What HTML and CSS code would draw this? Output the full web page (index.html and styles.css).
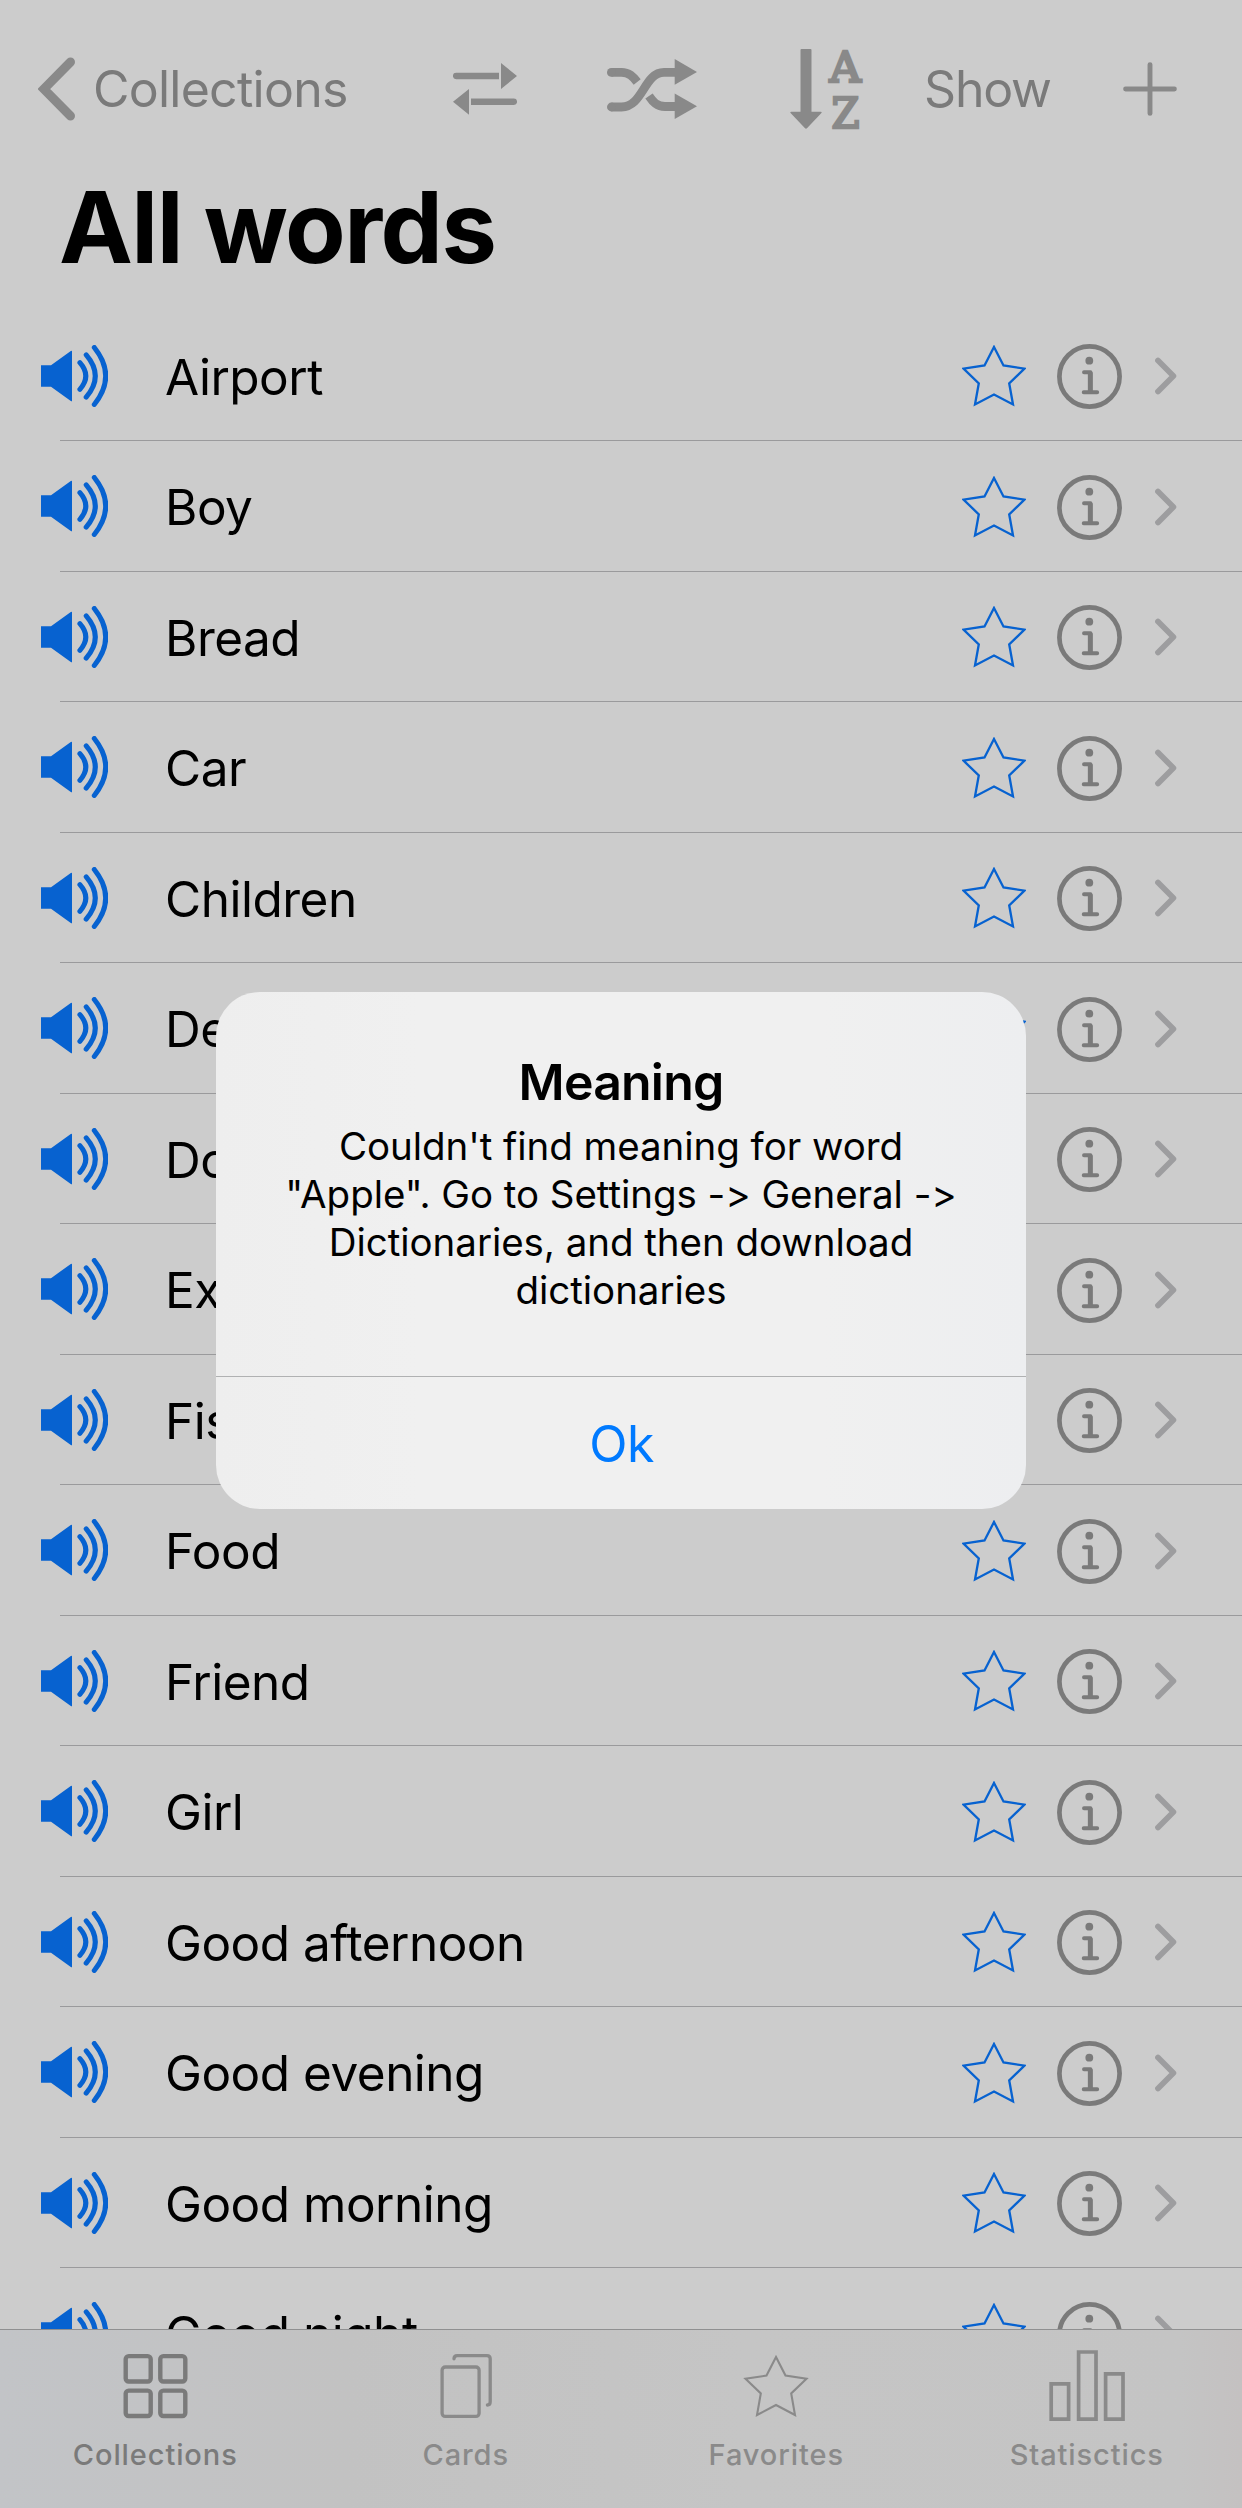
FILE: index.html
```html
<!DOCTYPE html>
<html lang="en">
<head>
<meta charset="utf-8">
<title>All words</title>
<link rel="stylesheet" href="styles.css">
</head>
<body>
<svg class="sprite" aria-hidden="true">
  <symbol id="speaker" viewBox="0 0 67 62">
    <path fill="currentColor" d="M0 20.2H10L29.8 5.9Q31 5.2 31 6.6V55.4Q31 56.8 29.8 56L10 41.8H0Z"/>
    <path fill="none" stroke="currentColor" stroke-width="5" stroke-linecap="round" d="M38.9 17.7Q50.7 31 38.9 44.3M45.2 9.9Q63.4 31 45.2 52.1M53.3 2.5Q76.1 31 53.3 59.5"/>
  </symbol>
  <symbol id="star" viewBox="0 0 64 62">
    <path fill="none" stroke="currentColor" stroke-width="2.3" d="M32 2 41.5 20.5 62.5 23.7 47.2 38.3 51 59.5 32 49.5 13 59.5 16.8 38.3 1.5 23.7 22.5 20.5Z"/>
  </symbol>
  <symbol id="info" viewBox="0 0 65 65">
    <circle cx="32.5" cy="32.5" r="30.1" fill="none" stroke="currentColor" stroke-width="4.7"/>
    <circle cx="32.3" cy="16.7" r="3.9" fill="currentColor"/>
    <path fill="none" stroke="currentColor" stroke-width="3.9" stroke-linecap="round" stroke-linejoin="round" d="M27 28.3H33.5V48M26.7 48.3H40.2"/>
    <path stroke="currentColor" stroke-width="4.9" d="M33.3 28.3V48"/>
  </symbol>
  <symbol id="chevron" viewBox="0 0 22 38">
    <path fill="none" stroke="currentColor" stroke-width="5.7" stroke-linecap="round" stroke-linejoin="round" d="M3 3.6 18.4 19 3 34.4"/>
  </symbol>
</svg>
<div class="screen">
  <header class="nav">
    <a class="back">
      <svg class="icon-back" viewBox="0 0 38 64"><path fill="none" stroke="currentColor" stroke-width="9" stroke-linecap="round" d="M32.5 5 5.8 32 32.5 59"/></svg>
      <span class="back-label">Collections</span>
    </a>
    <svg class="icon-swap" viewBox="0 0 64 52">
      <path fill="currentColor" d="M3.2 9.7H46V16.2H3.2A3.2 3.2 0 0 1 3.2 9.7ZM48 0 64 13 48 26ZM60.8 35.5H18V42H60.8A3.2 3.2 0 0 0 60.8 35.5ZM16 26 0 38.8 16 51.7Z"/>
    </svg>
    <svg class="icon-shuffle" viewBox="0 0 90 60">
      <path fill="currentColor" d="M67.7 0 90 13 67.7 25.7ZM67.7 34.5 90 47.3 67.7 60Z"/>
      <path fill="none" stroke="currentColor" stroke-width="8.8" d="M4.4 13.4H14.5C22 13.4 26 17.5 30.2 23M4.4 48H14.5C36 48 37 13.4 57 13.4H68.5M42 37C46 43 50 47.5 58 47.5H68.5"/>
      <circle cx="4.4" cy="13.4" r="4.4" fill="currentColor"/><circle cx="4.4" cy="48" r="4.4" fill="currentColor"/>
    </svg>
    <svg class="icon-sort" viewBox="0 0 74 80">
      <path fill="currentColor" d="M10.5 1Q10.5 0 11.5 0H20.5Q21.5 0 21.5 1V62.8H30.5Q32.5 62.8 31.2 64.2L17.2 79Q16 80.5 14.8 79L.8 64.2Q-.5 62.8 1.5 62.8H10.5Z"/>
      <text class="sort-letter" x="39.4" y="32.7" textLength="31.5" lengthAdjust="spacingAndGlyphs">A</text>
      <text class="sort-letter" x="41.5" y="78.7" textLength="28" lengthAdjust="spacingAndGlyphs">Z</text>
    </svg>
    <a class="show">Show</a>
    <svg class="icon-plus" viewBox="0 0 54 54"><path stroke="currentColor" stroke-width="4.9" stroke-linecap="round" d="M27 2.6V51.4M2.6 27H51.4"/></svg>
  </header>
  <h1 class="title">All words</h1>
  <main class="list">
    <div class="row"><svg class="speaker"><use href="#speaker"/></svg><div class="word">Airport</div><svg class="star"><use href="#star"/></svg><svg class="info"><use href="#info"/></svg><svg class="chevron"><use href="#chevron"/></svg></div>
    <div class="row"><svg class="speaker"><use href="#speaker"/></svg><div class="word">Boy</div><svg class="star"><use href="#star"/></svg><svg class="info"><use href="#info"/></svg><svg class="chevron"><use href="#chevron"/></svg></div>
    <div class="row"><svg class="speaker"><use href="#speaker"/></svg><div class="word">Bread</div><svg class="star"><use href="#star"/></svg><svg class="info"><use href="#info"/></svg><svg class="chevron"><use href="#chevron"/></svg></div>
    <div class="row"><svg class="speaker"><use href="#speaker"/></svg><div class="word">Car</div><svg class="star"><use href="#star"/></svg><svg class="info"><use href="#info"/></svg><svg class="chevron"><use href="#chevron"/></svg></div>
    <div class="row"><svg class="speaker"><use href="#speaker"/></svg><div class="word">Children</div><svg class="star"><use href="#star"/></svg><svg class="info"><use href="#info"/></svg><svg class="chevron"><use href="#chevron"/></svg></div>
    <div class="row"><svg class="speaker"><use href="#speaker"/></svg><div class="word">Desk</div><svg class="star"><use href="#star"/></svg><svg class="info"><use href="#info"/></svg><svg class="chevron"><use href="#chevron"/></svg></div>
    <div class="row"><svg class="speaker"><use href="#speaker"/></svg><div class="word">Dog</div><svg class="star"><use href="#star"/></svg><svg class="info"><use href="#info"/></svg><svg class="chevron"><use href="#chevron"/></svg></div>
    <div class="row"><svg class="speaker"><use href="#speaker"/></svg><div class="word">Exit</div><svg class="star"><use href="#star"/></svg><svg class="info"><use href="#info"/></svg><svg class="chevron"><use href="#chevron"/></svg></div>
    <div class="row"><svg class="speaker"><use href="#speaker"/></svg><div class="word">Fish</div><svg class="star"><use href="#star"/></svg><svg class="info"><use href="#info"/></svg><svg class="chevron"><use href="#chevron"/></svg></div>
    <div class="row"><svg class="speaker"><use href="#speaker"/></svg><div class="word">Food</div><svg class="star"><use href="#star"/></svg><svg class="info"><use href="#info"/></svg><svg class="chevron"><use href="#chevron"/></svg></div>
    <div class="row"><svg class="speaker"><use href="#speaker"/></svg><div class="word">Friend</div><svg class="star"><use href="#star"/></svg><svg class="info"><use href="#info"/></svg><svg class="chevron"><use href="#chevron"/></svg></div>
    <div class="row"><svg class="speaker"><use href="#speaker"/></svg><div class="word">Girl</div><svg class="star"><use href="#star"/></svg><svg class="info"><use href="#info"/></svg><svg class="chevron"><use href="#chevron"/></svg></div>
    <div class="row"><svg class="speaker"><use href="#speaker"/></svg><div class="word">Good afternoon</div><svg class="star"><use href="#star"/></svg><svg class="info"><use href="#info"/></svg><svg class="chevron"><use href="#chevron"/></svg></div>
    <div class="row"><svg class="speaker"><use href="#speaker"/></svg><div class="word">Good evening</div><svg class="star"><use href="#star"/></svg><svg class="info"><use href="#info"/></svg><svg class="chevron"><use href="#chevron"/></svg></div>
    <div class="row"><svg class="speaker"><use href="#speaker"/></svg><div class="word">Good morning</div><svg class="star"><use href="#star"/></svg><svg class="info"><use href="#info"/></svg><svg class="chevron"><use href="#chevron"/></svg></div>
    <div class="row"><svg class="speaker"><use href="#speaker"/></svg><div class="word">Good night</div><svg class="star"><use href="#star"/></svg><svg class="info"><use href="#info"/></svg><svg class="chevron"><use href="#chevron"/></svg></div>
  </main>
  <nav class="tabs">
    <a class="tab active">
      <svg class="tab-icon" viewBox="0 0 76 74"><g fill="none" stroke="currentColor" stroke-width="4.4"><rect x="8.7" y="7.1" width="25" height="25.4" rx="3"/><rect x="43.3" y="7.1" width="25" height="25.4" rx="3"/><rect x="8.7" y="41.6" width="25" height="25.4" rx="3"/><rect x="43.3" y="41.6" width="25" height="25.4" rx="3"/></g></svg>
      <span class="tab-label">Collections</span>
    </a>
    <a class="tab">
      <svg class="tab-icon" viewBox="0 0 76 74"><g fill="none" stroke="currentColor" stroke-width="3.3" stroke-linecap="round"><rect x="14.1" y="18" width="37" height="49.4" rx="3.2"/><path d="M26 9.8Q26 6.6 29.2 6.6H59Q62.2 6.6 62.2 9.8V52.8Q62.2 56 59.4 56"/></g></svg>
      <span class="tab-label">Cards</span>
    </a>
    <a class="tab">
      <svg class="tab-icon" viewBox="0 0 76 74"><path fill="none" stroke="currentColor" stroke-width="2.1" d="M38 8 47.5 26.6 68.5 29.8 53.2 44.4 57 66 38 56 19 66 22.8 44.4 7.5 29.8 28.5 26.6Z"/></svg>
      <span class="tab-label">Favorites</span>
    </a>
    <a class="tab">
      <svg class="tab-icon" viewBox="0 0 76 74"><path fill="none" stroke="currentColor" stroke-width="3.7" d="M2.2 34.8H19.6V70.2H2.2ZM29.6 3H47V70.2H29.6ZM56.6 24.8H74V70.2H56.6Z"/></svg>
      <span class="tab-label">Statisctics</span>
    </a>
  </nav>
  <div class="alert" role="alertdialog">
    <div class="alert-body">
      <h2 class="alert-title">Meaning</h2>
      <p class="alert-text">Couldn't find meaning for word<br>"Apple". Go to Settings -&gt; General -&gt;<br>Dictionaries, and then download<br>dictionaries</p>
    </div>
    <div class="alert-button">Ok</div>
  </div>
</div>
</body>
</html>
```

FILE: styles.css
```css
* { box-sizing: border-box; }

body {
  margin: 0;
  background: #ccc;
  color: #000;
  font-family: Inter, "Liberation Sans", sans-serif;
  font-variant-ligatures: none;
  font-feature-settings: "calt" 0;
}

svg { display: block; flex: none; }
.sprite { display: none; }

.screen {
  position: relative;
  display: flex;
  flex-direction: column;
  width: 1242px;
  height: 2508px;
  overflow: hidden;
}

/* Navigation bar */
.nav {
  display: flex;
  align-items: center;
  flex: none;
  height: 172px;
  padding: 6px 65px 0 38px;
  color: #898989;
}
.back { display: flex; align-items: center; width: 415px; }
.icon-back { width: 38px; height: 64px; }
.back-label, .show {
  color: #7a7a7a;
  font-size: 50px;
  line-height: 60px;
  letter-spacing: -0.75px;
}
.back-label { margin-left: 17px; }
.icon-swap { width: 64px; height: 52px; }
.icon-shuffle { width: 90px; height: 60px; margin-left: 90px; }
.icon-sort { width: 74px; height: 80px; margin-left: 93px; overflow: visible; }
.sort-letter {
  fill: currentColor;
  stroke: currentColor;
  stroke-width: 2.6px;
  font: 43px "DejaVu Serif", serif;
}
.show { margin-left: 60px; flex: 1; letter-spacing: -1.2px; }
.icon-plus { width: 54px; height: 54px; }

.title {
  flex: none;
  height: 138.5px;
  margin: 0;
  padding-left: 59px;
  font-size: 99px;
  font-weight: 700;
  line-height: 110px;
  letter-spacing: -1.55px;
}

/* Word list */
.list { flex: 1; min-height: 0; overflow: hidden; }
.row {
  display: flex;
  align-items: center;
  height: 130.5px;
  padding: 0 65px 0 41px;
  background: linear-gradient(#9a9a9c, #9a9a9c) 60px 100% / 100% 1px no-repeat;
}
.speaker { width: 67px; height: 62px; color: #0762d0; }
.word {
  flex: 1;
  margin-left: 57px;
  padding-top: 2px;
  font-size: 49.5px;
  line-height: 60px;
  letter-spacing: -0.5px;
}
.star { width: 64px; height: 62px; margin-top: 1px; color: #0762d0; }
.info { width: 65px; height: 65px; margin: 2px 0 0 31px; color: #7a7a7a; }
.chevron { width: 22px; height: 38px; margin: 1px 0 0 33px; color: #9d9d9f; }

/* Tab bar */
.tabs {
  display: flex;
  flex: none;
  height: 179px;
  border-top: 1px solid #8f8f90;
  background: linear-gradient(90deg, #c2c4c7, #c2c2c2 28%, #c5c5c5 60%, #c4c4c4 95%, #c4c1c1);
}
.tab {
  display: flex;
  flex: 1;
  flex-direction: column;
  align-items: center;
  padding-top: 19px;
  color: #8a8a8a;
}
.tab.active { color: #7a7a7a; }
.tab-icon { width: 76px; height: 74px; }
.tab-label {
  margin-top: 14px;
  font-size: 29px;
  font-weight: 500;
  line-height: 36px;
  letter-spacing: 0.9px;
}

/* Alert dialog */
.alert {
  position: absolute;
  top: 992px;
  left: 216px;
  display: flex;
  flex-direction: column;
  width: 810px;
  height: 517px;
  border-radius: 44px;
  overflow: hidden;
  background: linear-gradient(90deg, #eeeeee, #f0f0f0 25%, #f0f0f0 75%, #edeef0);
  text-align: center;
}
.alert-body {
  flex: none;
  height: 385px;
  padding-top: 60px;
  border-bottom: 1px solid #b0b1b2;
}
.alert-title {
  margin: 0;
  font-size: 50px;
  font-weight: 600;
  line-height: 60px;
  letter-spacing: -0.8px;
}
.alert-text {
  margin: 10px 0 0;
  font-size: 38.5px;
  line-height: 48px;
  letter-spacing: -0.05px;
}
.alert-button {
  flex: none;
  height: 132px;
  padding: 3px 0 0 1px;
  color: #007aff;
  font-size: 50px;
  line-height: 129px;
  letter-spacing: -0.5px;
}
```
